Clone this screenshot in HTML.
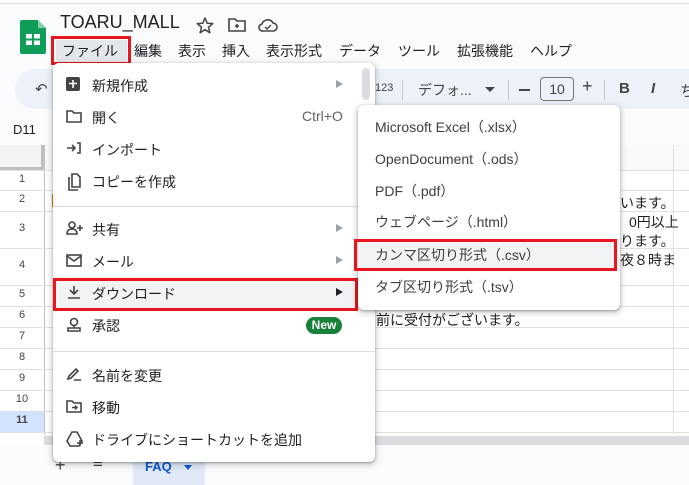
<!DOCTYPE html><html><head><meta charset="utf-8"><style>
*{margin:0;padding:0;box-sizing:border-box}
body{width:689px;height:485px;overflow:hidden;position:relative;background:#fff;font-family:"Liberation Sans","Noto Sans CJK JP",sans-serif;color:#202124}
.a{position:absolute}
.t{font-size:14px;white-space:nowrap}
.mi{position:absolute;left:0;right:0;height:32px;font-size:14px;color:#202124}
.mi .tx{position:absolute;left:39px;top:7px}
.mi svg{position:absolute;left:13px;top:8px}
.ar{position:absolute;left:283px;top:11px;width:0;height:0;border-left:7px solid #9aa0a6;border-top:4px solid transparent;border-bottom:4px solid transparent}
.si{position:absolute;left:17px;font-size:14px;color:#3c4043;white-space:nowrap}
.hl{position:absolute;left:0;width:689px;height:1px;background:#e1e1e1}
</style></head><body>
<div class="a" style="left:0;top:0;width:689px;height:145px;background:#f9fbfd"></div>
<div class="a" style="left:0;top:3px;width:689px;height:1px;background:#dadce0"></div>
<svg class="a" style="left:20px;top:20px" width="26" height="34" viewBox="0 0 26 34"><path d="M2 0H18L26 8V32Q26 34 24 34H2Q0 34 0 32V2Q0 0 2 0Z" fill="#0f9d58"/><path d="M18 0L26 8H18Z" fill="#87ceac"/><rect x="6" y="14" width="14" height="11" fill="#fff"/><rect x="12" y="14" width="2" height="11" fill="#0f9d58"/><rect x="6" y="18.5" width="14" height="2" fill="#0f9d58"/></svg>
<div class="a" style="left:60px;top:12px;font-size:18px;color:#202124">TOARU_MALL</div>
<svg class="a" style="left:196px;top:17px" width="18" height="17" viewBox="0 0 18 17"><path d="M9 1L11.2 6.2L16.8 6.6L12.5 10.2L13.9 15.7L9 12.7L4.1 15.7L5.5 10.2L1.2 6.6L6.8 6.2Z" fill="none" stroke="#444" stroke-width="1.5" stroke-linejoin="round"/></svg>
<svg class="a" style="left:228px;top:18px" width="18" height="14" viewBox="0 0 18 14"><path d="M1 1H7L9 3H17V13H1Z" fill="none" stroke="#444" stroke-width="1.6"/><path d="M9 6V10M7 8H11" stroke="#444" stroke-width="1.6"/></svg>
<svg class="a" style="left:258px;top:18px" width="20" height="14" viewBox="0 0 20 14"><path d="M5 13H15A4 4 0 0 0 15 5A6 6 0 0 0 4 6A3.5 3.5 0 0 0 5 13Z" fill="none" stroke="#444" stroke-width="1.6"/><path d="M7 9L9 11L13 7" fill="none" stroke="#444" stroke-width="1.4"/></svg>
<div class="a" style="left:56px;top:40px;width:71px;height:22px;background:#e3e6ea"></div>
<div class="a" style="left:51px;top:36px;width:80px;height:29px;border:3px solid #e8161f"></div>
<div class="a t" style="left:62px;top:41px">ファイル</div>
<div class="a t" style="left:134px;top:41px">編集</div>
<div class="a t" style="left:178px;top:41px">表示</div>
<div class="a t" style="left:222px;top:41px">挿入</div>
<div class="a t" style="left:266px;top:41px">表示形式</div>
<div class="a t" style="left:339px;top:41px">データ</div>
<div class="a t" style="left:398px;top:41px">ツール</div>
<div class="a t" style="left:457px;top:41px">拡張機能</div>
<div class="a t" style="left:530px;top:41px">ヘルプ</div>
<div class="a" style="left:15px;top:69px;width:700px;height:40px;border-radius:20px;background:#edf2fa"></div>
<div class="a" style="left:35px;top:80px;font-size:15px;color:#444">↶</div>
<div class="a" style="left:375px;top:82px;font-size:11px;color:#444">123</div>
<div class="a" style="left:402px;top:80px;width:1px;height:20px;background:#c7c7c7"></div>
<div class="a t" style="left:418px;top:80px;color:#444">デフォ...</div>
<div class="a" style="left:485px;top:87px;border-top:5px solid #444;border-left:5px solid transparent;border-right:5px solid transparent"></div>
<div class="a" style="left:508px;top:80px;width:1px;height:20px;background:#c7c7c7"></div>
<div class="a" style="left:519px;top:89px;width:11px;height:2px;background:#444"></div>
<div class="a" style="left:540px;top:77px;width:34px;height:24px;border:1px solid #747775;border-radius:4px;font-size:14px;text-align:center;line-height:22px;color:#444">10</div>
<div class="a" style="left:582px;top:76px;font-size:18px;color:#444">+</div>
<div class="a" style="left:604px;top:80px;width:1px;height:20px;background:#c7c7c7"></div>
<div class="a" style="left:619px;top:80px;font-size:15px;font-weight:bold;color:#444">B</div>
<div class="a" style="left:651px;top:80px;font-size:15px;font-weight:bold;font-style:italic;color:#444">I</div>
<div class="a" style="left:680px;top:80px;font-size:15px;color:#444">ち</div>
<div class="a" style="left:13px;top:122px;font-size:13px">D11</div>
<div class="a" style="left:0;top:145px;width:689px;height:25px;background:#f8f9fa"></div>
<div class="a" style="left:0;top:145px;width:44px;height:25px;background:#f1f3f4;border-right:3px solid #c0c0c0;border-bottom:3px solid #c0c0c0"></div>
<div class="a" style="left:44px;top:145px;width:1px;height:290px;background:#c0c0c0"></div>
<div class="a" style="left:673px;top:145px;width:1px;height:290px;background:#e1e1e1"></div>
<div class="hl" style="top:170px"></div><div class="hl" style="top:190px"></div><div class="hl" style="top:211px"></div><div class="hl" style="top:248px"></div><div class="hl" style="top:285px"></div><div class="hl" style="top:306px"></div><div class="hl" style="top:327px"></div><div class="hl" style="top:348px"></div><div class="hl" style="top:369px"></div><div class="hl" style="top:390px"></div><div class="hl" style="top:411px"></div><div class="hl" style="top:432px"></div>
<div class="a" style="left:0;top:411px;width:44px;height:21px;background:#d3e3fd"></div>
<div class="a" style="left:0;top:170px;width:44px;font-size:11px;color:#444;text-align:center">
<div style="position:absolute;top:3px;width:44px">1</div><div style="position:absolute;top:23px;width:44px">2</div><div style="position:absolute;top:52px;width:44px">3</div><div style="position:absolute;top:89px;width:44px">4</div><div style="position:absolute;top:118px;width:44px">5</div><div style="position:absolute;top:139px;width:44px">6</div><div style="position:absolute;top:160px;width:44px">7</div><div style="position:absolute;top:181px;width:44px">8</div><div style="position:absolute;top:202px;width:44px">9</div><div style="position:absolute;top:223px;width:44px">10</div><div style="position:absolute;top:244px;width:44px;font-weight:bold">11</div></div>
<div class="a" style="left:52px;top:194px;width:2px;height:13px;background:#e37400"></div>
<div class="a t" style="left:620px;top:193px">います。</div>
<div class="a t" style="left:629px;top:212px">0円以上</div>
<div class="a t" style="left:620px;top:231px">ります。</div>
<div class="a t" style="left:620px;top:250px">夜８時ま</div>
<div class="a t" style="left:376px;top:310px">前に受付がございます。</div>
<div class="a" style="left:44px;top:436px;width:645px;height:9px;background:#dadce0"></div>
<div class="a" style="left:0;top:446px;width:689px;height:39px;background:#f9fbfd"></div>
<div class="a" style="left:55px;top:455px;font-size:18px;color:#444">+</div>
<div class="a" style="left:93px;top:453px;font-size:17px;color:#444">≡</div>
<div class="a" style="left:133px;top:448px;width:72px;height:37px;background:#e1e9f7"></div>
<div class="a" style="left:145px;top:459px;font-size:13px;font-weight:bold;color:#0b57d0">FAQ</div>
<div class="a" style="left:184px;top:465px;border-top:5px solid #0b57d0;border-left:4px solid transparent;border-right:4px solid transparent"></div>
<div class="a" style="left:53px;top:63px;width:322px;height:399px;background:#fff;border-radius:6px;box-shadow:0 2px 6px 2px rgba(0,0,0,.15),0 1px 2px rgba(0,0,0,.3)">
<div class="a" style="left:309px;top:5px;width:8px;height:32px;border-radius:4px;background:#dadce0"></div>
<div class="mi" style="top:6px"><svg width="14" height="14"><rect width="14" height="14" rx="2" fill="#444"/><path d="M7 3V11M3 6.5H11" stroke="#fff" stroke-width="1.6"/></svg><span class="tx">新規作成</span><div class="ar"></div></div>
<div class="mi" style="top:38px"><svg width="16" height="14"><path d="M1 2H6L8 4H15V13H1Z" fill="none" stroke="#444" stroke-width="1.6"/></svg><span class="tx">開く</span><span style="position:absolute;left:249px;top:7px;color:#5f6368">Ctrl+O</span></div>
<div class="mi" style="top:70px"><svg width="16" height="14"><path d="M1 7H9M6 4L9 7L6 10M11 2H14V12H11" fill="none" stroke="#444" stroke-width="1.6"/></svg><span class="tx">インポート</span></div>
<div class="mi" style="top:102px"><svg width="16" height="18"><path d="M3 4V17H12M6 1H11L14 4V14H6Z" fill="none" stroke="#444" stroke-width="1.6"/></svg><span class="tx">コピーを作成</span></div>
<div class="a" style="left:0;top:143px;width:322px;height:1px;background:#dadce0"></div>
<div class="mi" style="top:150px"><svg width="18" height="14"><circle cx="6" cy="4" r="3" fill="none" stroke="#444" stroke-width="1.6"/><path d="M1 13Q1 8 6 8Q11 8 11 13Z" fill="none" stroke="#444" stroke-width="1.6"/><path d="M14 4V10M11 7H17" stroke="#444" stroke-width="1.6"/></svg><span class="tx">共有</span><div class="ar"></div></div>
<div class="mi" style="top:182px"><svg width="16" height="14"><rect x="1" y="2" width="14" height="11" fill="none" stroke="#444" stroke-width="1.6"/><path d="M1 3L8 8L15 3" fill="none" stroke="#444" stroke-width="1.6"/></svg><span class="tx">メール</span><div class="ar"></div></div>
<div class="mi" style="top:214px;background:#f1f3f4"><svg width="16" height="14"><path d="M8 1V9M4 5L8 9L12 5M2 13H14" fill="none" stroke="#444" stroke-width="1.6"/></svg><span class="tx">ダウンロード</span><div class="ar" style="border-left-color:#202124"></div></div>
<div class="mi" style="top:246px"><svg width="16" height="16"><circle cx="8" cy="5" r="3.5" fill="none" stroke="#444" stroke-width="1.6"/><path d="M8 9V11M2 11H14V14H2Z" fill="none" stroke="#444" stroke-width="1.6"/></svg><span class="tx">承認</span><span style="position:absolute;left:253px;top:8px;width:36px;height:17px;border-radius:9px;background:#188038;color:#fff;font-size:12px;font-weight:bold;text-align:center;line-height:17px">New</span></div>
<div class="a" style="left:0;top:288px;width:322px;height:1px;background:#dadce0"></div>
<div class="mi" style="top:296px"><svg width="16" height="14"><path d="M2 12L3 9L10 2L12 4L5 11Z M8 13H15" fill="none" stroke="#444" stroke-width="1.6"/></svg><span class="tx">名前を変更</span></div>
<div class="mi" style="top:328px"><svg width="16" height="14"><path d="M1 2H6L8 4H15V13H1Z" fill="none" stroke="#444" stroke-width="1.6"/><path d="M6 8.5H11M9 6.5L11 8.5L9 10.5" fill="none" stroke="#444" stroke-width="1.4"/></svg><span class="tx">移動</span></div>
<div class="mi" style="top:360px"><svg width="18" height="16"><path d="M6 1H11L16 10L13 15H4L1 10Z" fill="none" stroke="#444" stroke-width="1.6"/><path d="M14 9V15M11 12H17" stroke="#444" stroke-width="1.6"/></svg><span class="tx">ドライブにショートカットを追加</span></div>
</div>
<div class="a" style="left:53px;top:278px;width:305px;height:33px;border:3px solid #e8161f"></div>
<div class="a" style="left:358px;top:105px;width:262px;height:205px;background:#fff;border-radius:6px;box-shadow:0 2px 6px 2px rgba(0,0,0,.15),0 1px 2px rgba(0,0,0,.3)">
<div class="si" style="top:12px">Microsoft Excel（.xlsx）</div>
<div class="si" style="top:44px">OpenDocument（.ods）</div>
<div class="si" style="top:76px">PDF（.pdf）</div>
<div class="si" style="top:107px">ウェブページ（.html）</div>
<div class="a" style="left:0;top:134px;width:262px;height:32px;background:#f1f3f4"></div>
<div class="si" style="top:140px">カンマ区切り形式（.csv）</div>
<div class="si" style="top:172px">タブ区切り形式（.tsv）</div>
</div>
<div class="a" style="left:354px;top:239px;width:263px;height:32px;border:3px solid #e8161f"></div>
</body></html>
